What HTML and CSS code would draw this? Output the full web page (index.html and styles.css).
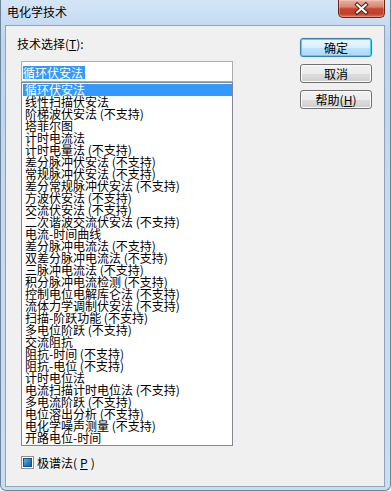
FILE: index.html
```html
<!DOCTYPE html>
<html lang="zh">
<head>
    <meta charset="UTF-8">
    <title>电化学技术</title>
    <link rel="stylesheet" href="styles.css">
</head>
<body>

<div class="window">
    <div class="titlebar">
        <span class="title">电化学技术</span>
        <button class="close">
            <svg width="47" height="18" viewBox="0 0 47 18">
                <path d="M19 4.5 L28 12.5 M28 4.5 L19 12.5" stroke="#4a1a12" stroke-width="4.2" stroke-linecap="square" fill="none"/>
                <path d="M19 4.5 L28 12.5 M28 4.5 L19 12.5" stroke="#ffffff" stroke-width="2.2" stroke-linecap="square" fill="none"/>
            </svg>
        </button>
    </div>

    <div class="client">
        <div class="main">
            <label class="field-label">技术选择(<u>T</u>):</label>
            <div class="combo">
                <div class="combo-edit"><span class="sel">循环伏安法</span></div>
                <ul class="combo-list">
                    <li class="active">循环伏安法</li>
                    <li>线性扫描伏安法</li>
                    <li>阶梯波伏安法 (不支持)</li>
                    <li>塔菲尔图</li>
                    <li>计时电流法</li>
                    <li>计时电量法 (不支持)</li>
                    <li>差分脉冲伏安法 (不支持)</li>
                    <li>常规脉冲伏安法 (不支持)</li>
                    <li>差分常规脉冲伏安法 (不支持)</li>
                    <li>方波伏安法 (不支持)</li>
                    <li>交流伏安法 (不支持)</li>
                    <li>二次谐波交流伏安法 (不支持)</li>
                    <li>电流-时间曲线</li>
                    <li>差分脉冲电流法 (不支持)</li>
                    <li>双差分脉冲电流法 (不支持)</li>
                    <li>三脉冲电流法 (不支持)</li>
                    <li>积分脉冲电流检测 (不支持)</li>
                    <li>控制电位电解库仑法 (不支持)</li>
                    <li>流体力学调制伏安法 (不支持)</li>
                    <li>扫描-阶跃功能 (不支持)</li>
                    <li>多电位阶跃 (不支持)</li>
                    <li>交流阻抗</li>
                    <li>阻抗-时间 (不支持)</li>
                    <li>阻抗-电位 (不支持)</li>
                    <li>计时电位法</li>
                    <li>电流扫描计时电位法 (不支持)</li>
                    <li>多电流阶跃 (不支持)</li>
                    <li>电位溶出分析 (不支持)</li>
                    <li>电化学噪声测量 (不支持)</li>
                    <li>开路电位-时间</li>
                </ul>
            </div>
            <label class="check"><span class="check-box"><span class="check-mark"></span></span>极谱法(<u>P</u>)</label>
        </div>

        <div class="actions">
            <button class="btn btn-default">确定</button>
            <button class="btn">取消</button>
            <button class="btn">帮助(<u>H</u>)</button>
        </div>
    </div>
</div>

</body>
</html>
```

FILE: styles.css
```css
body {
    margin: 0;
    font-family: "Noto Sans CJK SC", "Liberation Sans", sans-serif;
    font-size: 12px;
    color: #000;
}
.window {
    width: 391px;
    height: 491px;
    box-sizing: border-box;
    display: flex;
    flex-direction: column;
    background: linear-gradient(to bottom, #d4e5f7, #bdd6ef 40px, #c4dbf1 200px, #c9def2);
    border: 1px solid #6f8499;
    border-top: none;
    border-radius: 0 0 6px 6px;
    padding: 0 5px 3px 4px;
}
.titlebar {
    height: 25px;
    display: flex;
    justify-content: space-between;
    align-items: flex-start;
    flex-shrink: 0;
}
.title {
    margin: 6px 0 0 2px;
    line-height: 12px;
}
.close {
    width: 47px;
    height: 18px;
    padding: 0;
    border: 1px solid #6b2418;
    border-top: none;
    border-radius: 0 0 5px 5px;
    background: linear-gradient(to bottom, #eab0a3, #dd8571 40%, #c8452e 52%, #c2402a 80%, #d9715a);
    box-shadow: inset 0 0 0 1px rgba(255,255,255,0.25);
    display: flex;
}
.client {
    flex: 1;
    background: #f0f0f0;
    border: 1px solid #8fa3b8;
    display: flex;
    justify-content: space-between;
}
.main {
    padding: 12px 0 0 11px;
}
.field-label {
    display: block;
    line-height: 12px;
    height: 12px;
}
.combo {
    width: 212px;
    margin: 11px 0 0 4px;
}
.combo-edit {
    height: 21px;
    box-sizing: border-box;
    border: 1px solid #abadb3;
    background: #fff;
    padding: 2px 0 0 1px;
}
.sel {
    display: inline-block;
    background: #3399ff;
    color: #fff;
    line-height: 13px;
    height: 13px;
    padding-right: 2px;
}
.combo-list {
    list-style: none;
    margin: 0;
    padding: 1px 0 1px 1px;
    border: 1px solid #828790;
    background: #fff;
}
.combo-list li {
    height: 12px;
    line-height: 12px;
    padding-left: 2px;
    white-space: nowrap;
}
.combo-list li.active {
    background: #3399ff;
    color: #fff;
}
.check {
    display: flex;
    align-items: center;
    gap: 3px;
    margin: 10px 0 0 4px;
    line-height: 13px;
}
.check-box {
    width: 13px;
    height: 13px;
    box-sizing: border-box;
    border: 1px solid #8e8f8f;
    background: #fff;
    display: flex;
    align-items: center;
    justify-content: center;
}
.check-mark {
    width: 9px;
    height: 9px;
    box-sizing: border-box;
    border: 1px solid #1c4f77;
    background: linear-gradient(135deg, #5bb6ea, #2a7fbf 55%, #1d5f93);
}
.actions {
    padding: 12px 12px 0 0;
    display: flex;
    flex-direction: column;
    gap: 7px;
}
.btn {
    width: 72px;
    height: 19px;
    padding: 0;
    font-family: inherit;
    font-size: 12px;
    line-height: 12px;
    color: #000;
    border: 1px solid #707070;
    border-radius: 3px;
    background: linear-gradient(to bottom, #f2f2f2, #ebebeb 50%, #dddddd 51%, #cfcfcf);
    box-shadow: inset 0 0 0 1px #fcfcfc;
}
.btn-default {
    border-color: #3c7fb1;
    background: linear-gradient(to bottom, #eaf6fd, #d9f0fc 50%, #bee6fd 51%, #a7d9f5);
    box-shadow: inset 0 0 0 1px #48d4fb, 0 0 1px #48d4fb;
}
```
